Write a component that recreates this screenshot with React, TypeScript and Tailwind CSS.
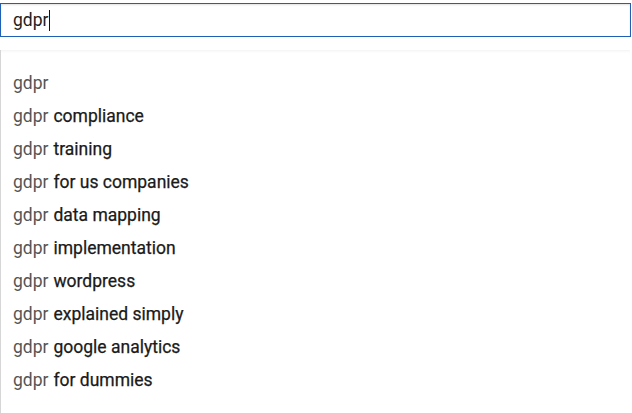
const suggestions = [
  "",
  "compliance",
  "training",
  "for us companies",
  "data mapping",
  "implementation",
  "wordpress",
  "explained simply",
  "google analytics",
  "for dummies",
];

function App() {
  return (
    <div className="w-[632px] h-[413px] bg-white overflow-hidden font-['Roboto',sans-serif]">
      <div className="pt-[3px] pr-[1px]">
        <div className="h-[34px] border border-[#1f5fb4] shadow-[inset_0_1px_2px_rgba(0,0,0,0.12)] flex items-center pl-[12px] text-[17.5px] text-[#222]">
          <span>gdpr</span>
          <span className="w-px h-[21px] bg-[#111] ml-px"></span>
        </div>
      </div>
      <div className="mt-[13px] mr-[2px] h-[400px] border-l border-[#d6d6d6] shadow-[inset_0_3px_3px_-2px_rgba(0,0,0,0.06)] pt-[17px]">
        {suggestions.map((s, i) => (
          <div key={i} className="h-[33px] flex items-center pl-[12px] text-[17.5px] leading-none">
            <span className="text-[#555]">gdpr</span>
            {s && (
              <span className="text-[#1a1a1a] ml-[5px] [-webkit-text-stroke:0.25px_#1a1a1a]">
                {s}
              </span>
            )}
          </div>
        ))}
      </div>
    </div>
  );
}

export default App;
